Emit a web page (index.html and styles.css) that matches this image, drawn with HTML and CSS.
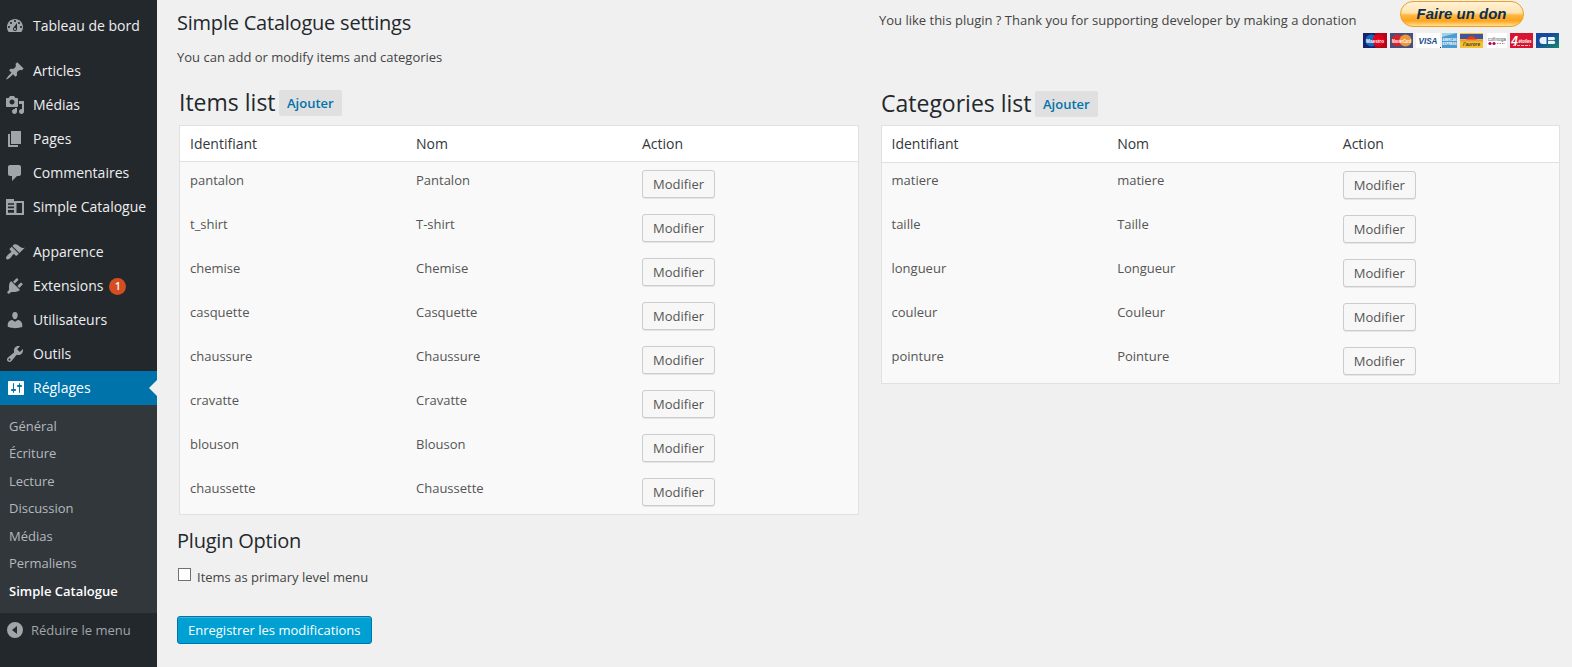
FILE: index.html
```html
<!DOCTYPE html>
<html lang="fr">
<head>
<meta charset="utf-8">
<title>Simple Catalogue settings</title>
<link rel="stylesheet" href="styles.css">
</head>
<body>
<nav class="sidebar">
  <ul class="menu">
    <li class="item"><svg class="icon" viewBox="0 0 20 20"><path d="M3.76 16h12.48c1.1-1.37 1.76-3.11 1.76-5 0-4.42-3.58-8-8-8s-8 3.58-8 8c0 1.89.66 3.63 1.76 5zM10 4c.55 0 1 .45 1 1s-.45 1-1 1-1-.45-1-1 .45-1 1-1zM6 6c.55 0 1 .45 1 1s-.45 1-1 1-1-.45-1-1 .45-1 1-1zm8 0c.55 0 1 .45 1 1s-.45 1-1 1-1-.45-1-1 .45-1 1-1zm-5.37 5.55L12 7v6c0 1.1-.9 2-2 2s-2-.9-2-2c0-.57.24-1.08.63-1.45zM4 10c.55 0 1 .45 1 1s-.45 1-1 1-1-.45-1-1 .45-1 1-1zm12 0c.55 0 1 .45 1 1s-.45 1-1 1-1-.45-1-1 .45-1 1-1zm-5 3c0-.55-.45-1-1-1s-1 .45-1 1 .45 1 1 1 1-.45 1-1z" fill-rule="evenodd"/></svg><span>Tableau de bord</span></li>
    <li class="item group"><svg class="icon" viewBox="0 0 20 20"><path d="M10.44 3.02l1.82-1.82 6.36 6.35-1.83 1.82c-1.05-.68-2.48-.57-3.41.36l-.75.75c-.92.93-1.04 2.35-.35 3.41l-1.83 1.82-2.41-2.41-2.8 2.79c-.42.42-3.38 2.71-3.8 2.29s1.86-3.39 2.28-3.81l2.79-2.79L4.1 9.36l1.83-1.82c1.05.69 2.48.57 3.4-.36l.75-.75c.93-.92 1.05-2.35.36-3.41z"/></svg><span>Articles</span></li>
    <li class="item"><svg class="icon" viewBox="0 0 20 20"><path fill-rule="evenodd" d="M13 11V4c0-.55-.45-1-1-1h-1.67L9 1H5L3.67 3H2c-.55 0-1 .45-1 1v7c0 .55.45 1 1 1h10c.55 0 1-.45 1-1zM7 4.5c1.38 0 2.5 1.12 2.5 2.5S8.38 9.5 7 9.5 4.5 8.38 4.5 7 5.62 4.5 7 4.5zM14 6h5v10.5c0 1.38-1.12 2.5-2.5 2.5S14 17.88 14 16.5s1.12-2.5 2.5-2.5c.17 0 .34.02.5.05V9h-3V6zm-4 8.05V13h2v3.5c0 1.38-1.12 2.5-2.5 2.5S7 17.88 7 16.5 8.12 14 9.5 14c.17 0 .34.02.5.05z"/></svg><span>Médias</span></li>
    <li class="item"><svg class="icon" viewBox="0 0 20 20"><path d="M6 15V2h10v13H6zm-1 1h8v2H3V5h2v11z"/></svg><span>Pages</span></li>
    <li class="item"><svg class="icon" viewBox="0 0 20 20"><path d="M5 2h9c1.1 0 2 .9 2 2v7c0 1.1-.9 2-2 2h-2l-5 5v-5H5c-1.1 0-2-.9-2-2V4c0-1.1.9-2 2-2z"/></svg><span>Commentaires</span></li>
    <li class="item"><svg class="icon" viewBox="0 0 20 20"><path fill-rule="evenodd" d="M1 2h8v2h10v14H1zM3 6.200v1.600h6V6.200zM3 9.500v1.700h6V9.500zM3 13v2.800h6V13zM11.500 6v10h5.500V6z"/></svg><span>Simple Catalogue</span></li>
    <li class="item group"><svg class="icon" viewBox="0 0 20 20"><path d="M14.480 11.060L7.410 3.990l1.500-1.500c.5-.56 2.300-.47 3.510.32 1.210.8 1.430 1.280 2.910 2.100 1.180.64 2.450 1.260 4.450.85zm-.71.71L6.700 4.700 4.930 6.470c-.39.39-.39 1.020 0 1.410l1.060 1.060c.39.39.39 1.030 0 1.420-.6.6-1.430 1.110-2.210 1.690-.35.26-.7.53-1.010.84C1.430 14.230.4 16.080 1.400 17.070c.99 1 2.840-.03 4.180-1.360.31-.31.58-.66.85-1.020.57-.78 1.080-1.610 1.690-2.210.39-.39 1.020-.39 1.410 0l1.060 1.060c.39.39 1.020.39 1.410 0z"/></svg><span>Apparence</span></li>
    <li class="item"><svg class="icon" viewBox="0 0 20 20"><path d="M13.110 4.360L9.870 7.600 8 5.730l3.240-3.240c.35-.34 1.050-.2 1.560.32.52.51.66 1.210.31 1.550zm-8 1.770l.91-1.120 9.010 9.010-1.190.84c-.71.71-2.630 1.160-3.820 1.160H6.140L4.900 17.260c-.59.59-1.540.59-2.120 0-.59-.58-.59-1.530 0-2.120l1.240-1.240v-3.880c0-1.130.4-3.190 1.090-3.890zm7.260 3.970l3.240-3.240c.34-.35 1.040-.21 1.550.31.52.51.66 1.210.31 1.550l-3.240 3.250z"/></svg><span>Extensions</span><span class="count">1</span></li>
    <li class="item"><svg class="icon" viewBox="0 0 20 20"><path d="M10 9.250c-2.270 0-2.730-3.440-2.730-3.440C7 4.020 7.820 2 9.970 2c2.160 0 2.980 2.020 2.710 3.810 0 0-.41 3.440-2.680 3.440zm0 2.570L12.720 10c2.390 0 4.520 2.330 4.520 4.530v2.490s-3.650 1.130-7.240 1.130c-3.650 0-7.240-1.130-7.240-1.130v-2.490c0-2.250 1.940-4.480 4.470-4.480z"/></svg><span>Utilisateurs</span></li>
    <li class="item"><svg class="icon" viewBox="0 0 20 20"><path fill-rule="evenodd" d="M16.680 9.770c-1.340 1.340-3.300 1.670-4.950.99l-5.410 6.520c-.99.99-2.590.99-3.580 0s-.99-2.590 0-3.570l6.520-5.420c-.68-1.650-.35-3.610.99-4.950 1.280-1.280 3.120-1.620 4.720-1.060l-2.890 2.890 2.820 2.820 2.860-2.870c.53 1.580.18 3.390-1.080 4.650zM3.810 16.210c.4.39 1.040.39 1.430 0 .4-.4.4-1.040 0-1.430-.39-.4-1.030-.4-1.430 0-.39.39-.39 1.030 0 1.430z"/></svg><span>Outils</span></li>
    <li class="item current"><svg class="icon" viewBox="0 0 20 20"><path fill-rule="evenodd" d="M18 16V4c0-.55-.45-1-1-1H3c-.55 0-1 .45-1 1v12c0 .55.45 1 1 1h14c.55 0 1-.45 1-1zM8 11h1c.55 0 1 .45 1 1s-.45 1-1 1H8v1.500c0 .28-.22.5-.5.5s-.5-.22-.5-.5V13H6c-.55 0-1-.45-1-1s.45-1 1-1h1V5.500c0-.28.22-.5.5-.5s.5.22.5.5V11zm5-2h-1c-.55 0-1-.45-1-1s.45-1 1-1h1V5.500c0-.28.22-.5.5-.5s.5.22.5.5V7h1c.55 0 1 .45 1 1s-.45 1-1 1h-1v5.500c0 .28-.22.5-.5.5s-.5-.22-.5-.5V9z"/></svg><span>Réglages</span></li>
  </ul>
  <ul class="submenu">
    <li>Général</li><li>Écriture</li><li>Lecture</li><li>Discussion</li><li>Médias</li><li>Permaliens</li><li class="active">Simple Catalogue</li>
  </ul>
  <div class="collapse"><svg class="icon" viewBox="0 0 20 20"><path fill-rule="evenodd" d="M10 2a8 8 0 1 0 0 16a8 8 0 0 0 0-16zM12 6v8l-5-4z"/></svg><span>Réduire le menu</span></div>
</nav>

<main class="content">
  <header class="top">
    <div class="intro">
      <h2 class="title">Simple Catalogue settings</h2>
      <p>You can add or modify items and categories</p>
    </div>
    <p class="thanks">You like this plugin ? Thank you for supporting developer by making a donation</p>
    <div class="donate">
      <button class="don">Faire un don</button>
      <svg class="cards" width="197" height="15" viewBox="0 0 197 15">
        <defs><linearGradient id="cb" x2="1" y2="1"><stop offset=".4" stop-color="#174a9c"/><stop offset="1" stop-color="#148a6c"/></linearGradient></defs>
        <rect width="24" height="15" fill="#15246a"/><rect x="12" width="12" height="15" fill="#b3061c"/><circle cx="8.500" cy="7.500" r="6" fill="#1668c4"/><circle cx="15.500" cy="7.500" r="6" fill="#e2001a"/><text x="12" y="9.500" class="c w" font-size="5.500" textLength="18" lengthAdjust="spacingAndGlyphs">Maestro</text>
        <rect x="27" width="23" height="15" fill="#46507c"/><circle cx="34.500" cy="7.500" r="6" fill="#d8232f"/><circle cx="42.500" cy="7.500" r="6" fill="#f0963a"/><text x="38.500" y="9.500" class="c w" font-size="5" textLength="19" lengthAdjust="spacingAndGlyphs">MasterCard</text>
        <rect x="53" width="24" height="15" fill="#fff"/><text x="65" y="11" class="c v" font-size="9" textLength="19" lengthAdjust="spacingAndGlyphs">VISA</text><rect x="77" y="14" width="1" height="1" fill="#333"/>
        <rect x="79" width="15" height="15" fill="#4a9bd0"/><path d="M79 0h15L79 4z" fill="#9fd0e8"/><text x="86.500" y="7.500" class="c w" font-size="4" textLength="14" lengthAdjust="spacingAndGlyphs">AMERICAN</text><text x="86.500" y="11.500" class="c w" font-size="4" textLength="14" lengthAdjust="spacingAndGlyphs">EXPRESS</text>
        <rect x="97" width="23" height="15" fill="#f4c22e"/><rect x="97" y="1" width="23" height="5" fill="#41539c"/><path d="M103 7q5.500-8 11 0z" fill="#e43b20"/><rect x="97" y="6.500" width="23" height="2" fill="#ef9b2c"/><text x="108.500" y="12.500" class="c d" font-size="5" textLength="17" lengthAdjust="spacingAndGlyphs">l'aurore</text>
        <rect x="124" width="20" height="15" fill="#fff"/><text x="134" y="7.500" class="c g" font-size="5.500" textLength="18" lengthAdjust="spacingAndGlyphs">cofinoga</text><circle cx="127" cy="10.500" r="1.600" fill="#b40056"/><circle cx="131" cy="10.500" r="1.600" fill="#b40056"/><path d="M134 10.500h8" stroke="#bb7b9c" stroke-dasharray="1.500 1"/>
        <rect x="147" width="23" height="15" fill="#d81530"/><text x="151.500" y="11.500" class="c i" font-size="12">4</text><text x="162" y="9.500" class="c i" font-size="6" textLength="13" lengthAdjust="spacingAndGlyphs">étoiles</text><path d="M150 12.500h17" stroke="#fff" stroke-width=".7" stroke-dasharray="3 1"/>
        <rect x="173" width="23" height="15" fill="url(#cb)"/><path d="M183.500 4v7h-3.500a3.500 3.500 0 0 1 0-7zM185 4h6a1.750 1.750 0 0 1 0 3.200h-6zM185 7.900h6a1.600 1.600 0 0 1 0 3.100h-6z" fill="#e8f4f8"/>
      </svg>
    </div>
  </header>

  <div class="lists">
    <section class="list">
      <h2 class="heading">Items list <a class="add">Ajouter</a></h2>
      <table>
        <thead><tr><th>Identifiant</th><th>Nom</th><th>Action</th></tr></thead>
        <tbody>
          <tr><td>pantalon</td><td>Pantalon</td><td><button class="btn">Modifier</button></td></tr>
          <tr><td>t_shirt</td><td>T-shirt</td><td><button class="btn">Modifier</button></td></tr>
          <tr><td>chemise</td><td>Chemise</td><td><button class="btn">Modifier</button></td></tr>
          <tr><td>casquette</td><td>Casquette</td><td><button class="btn">Modifier</button></td></tr>
          <tr><td>chaussure</td><td>Chaussure</td><td><button class="btn">Modifier</button></td></tr>
          <tr><td>cravatte</td><td>Cravatte</td><td><button class="btn">Modifier</button></td></tr>
          <tr><td>blouson</td><td>Blouson</td><td><button class="btn">Modifier</button></td></tr>
          <tr><td>chaussette</td><td>Chaussette</td><td><button class="btn">Modifier</button></td></tr>
        </tbody>
      </table>
    </section>
    <section class="list categories">
      <h2 class="heading">Categories list <a class="add">Ajouter</a></h2>
      <table>
        <thead><tr><th>Identifiant</th><th>Nom</th><th>Action</th></tr></thead>
        <tbody>
          <tr><td>matiere</td><td>matiere</td><td><button class="btn">Modifier</button></td></tr>
          <tr><td>taille</td><td>Taille</td><td><button class="btn">Modifier</button></td></tr>
          <tr><td>longueur</td><td>Longueur</td><td><button class="btn">Modifier</button></td></tr>
          <tr><td>couleur</td><td>Couleur</td><td><button class="btn">Modifier</button></td></tr>
          <tr><td>pointure</td><td>Pointure</td><td><button class="btn">Modifier</button></td></tr>
        </tbody>
      </table>
    </section>
  </div>

  <h2 class="title option-title">Plugin Option</h2>
  <label class="option"><input type="checkbox"><span>Items as primary level menu</span></label>
  <button class="save">Enregistrer les modifications</button>
</main>
</body>
</html>
```
FILE: styles.css
```css
* { box-sizing: border-box; }
body {
  margin: 0;
  display: flex;
  height: 667px;
  overflow: hidden;
  background: #f0f0f0;
  color: #444;
  font: 13px/20px "Open Sans", sans-serif;
}
h2, p, ul { margin: 0; padding: 0; font-weight: 400; }
ul { list-style: none; }
button { font-family: inherit; display: block; white-space: nowrap; }

.sidebar { width: 157px; flex: none; background: #23282d; color: #eee; }
.menu { padding-top: 9px; }
.item {
  display: flex;
  align-items: center;
  height: 34px;
  padding-left: 5px;
  gap: 8px;
  font-size: 14px;
  white-space: nowrap;
}
.item.group { margin-top: 11px; }
.icon { width: 20px; height: 20px; flex: none; fill: #a0a5aa; }
.current { padding-left: 6px; gap: 7px; background: #0073aa; color: #fff; }
.current .icon { fill: #fff; }
.current::after {
  content: "";
  margin-left: auto;
  border: 8px solid transparent;
  border-left: 0;
  border-right-color: #f0f0f0;
}
.count {
  width: 17px;
  height: 17px;
  margin-left: -2px;
  border-radius: 50%;
  background: #d54e21;
  color: #fff;
  font-size: 10px;
  font-weight: 600;
  line-height: 17px;
  text-align: center;
}
.submenu { height: 208px; padding: 7.7px 9px 0; background: #32373c; color: #b4b9be; }
.submenu li { height: 27.5px; line-height: 27.5px; }
.submenu .active { color: #fff; font-weight: 600; }
.collapse {
  display: flex;
  align-items: center;
  gap: 6px;
  height: 34px;
  padding-left: 5px;
  color: #a0a5aa;
}

.content { flex: 1; padding: 0 12px 0 20px; min-width: 0; }
.top { display: flex; height: 88px; }
.intro { width: 702px; padding-top: 8px; }
.title { color: #23282d; font-size: 20px; line-height: 30px; letter-spacing: -.22px; }
.intro p { padding-top: 9px; }
.thanks { padding-top: 10px; white-space: nowrap; }
.donate { margin-left: auto; width: 197px; display: flex; flex-direction: column; align-items: center; }
.don {
  width: 124px;
  height: 26px;
  margin: 1px 0 6px;
  padding: 0;
  border: 1px solid #f0a020;
  border-radius: 13px;
  background: linear-gradient(#fff2d8 0, #ffe3ae 45%, #ffb73c 55%, #ffa41e 78%, #ffdf8e 100%);
  color: #0a2f52;
  font: italic bold 15px/22px "Liberation Sans", sans-serif;
}
.c { text-anchor: middle; font-family: "Liberation Sans", sans-serif; font-weight: 700; }
.w { fill: #fff; }
.v { fill: #174a82; font-style: italic; }
.d { fill: #4a3630; font-style: italic; }
.g { fill: #555; font-weight: 400; }
.i { fill: #fff; font-style: italic; }

.lists { display: grid; grid-template-columns: 680px 679px; gap: 22px; padding-left: 2px; }
.heading { height: 37px; color: #23282d; font-size: 23px; line-height: 29px; white-space: nowrap; }
.add {
  display: inline-block;
  height: 26px;
  margin-left: -3px;
  padding: 0 8.5px;
  border-radius: 2px;
  background: #e0e0e0;
  color: #0073aa;
  font-size: 13px;
  font-weight: 600;
  line-height: 26px;
  vertical-align: 3px;
}
table {
  width: 100%;
  table-layout: fixed;
  border-collapse: separate;
  border-spacing: 0;
  border: 1px solid #e1e1e1;
  background: #f9f9f9;
}
th {
  height: 36px;
  padding: 0 10px;
  border-bottom: 1px solid #e1e1e1;
  background: #fff;
  color: #32373c;
  font-size: 14px;
  font-weight: 400;
  text-align: left;
}
td { height: 44px; padding: 8px 10px 0; color: #555; vertical-align: top; }
.btn {
  height: 28px;
  padding: 0 10px;
  border: 1px solid #ccc;
  border-radius: 3px;
  background: #f7f7f7;
  box-shadow: 0 1px 0 rgba(0, 0, 0, .08);
  color: #555;
  font-size: 13px;
  line-height: 26px;
}
.categories .heading { padding-top: 1px; }
.categories th { height: 37px; padding: 0 9.5px 1px; }
.categories td { padding: 7px 9.5px 0; }
.categories .btn { margin-top: 1px; }

.option-title { padding-top: 11px; }
.option { display: flex; align-items: flex-start; gap: 6px; padding-top: 11px; line-height: 21px; }
.option input { appearance: none; width: 13px; height: 13px; margin: 1px 0 0 1px; border: 1px solid #707070; background: #fff; }
.save {
  height: 28px;
  margin-top: 28px;
  padding: 0 10px;
  border: 1px solid #0073aa;
  border-radius: 3px;
  background: #00a0d2;
  box-shadow: inset 0 1px 0 rgba(120, 200, 230, .5);
  color: #fff;
  font-size: 13px;
  line-height: 26px;
}
```
